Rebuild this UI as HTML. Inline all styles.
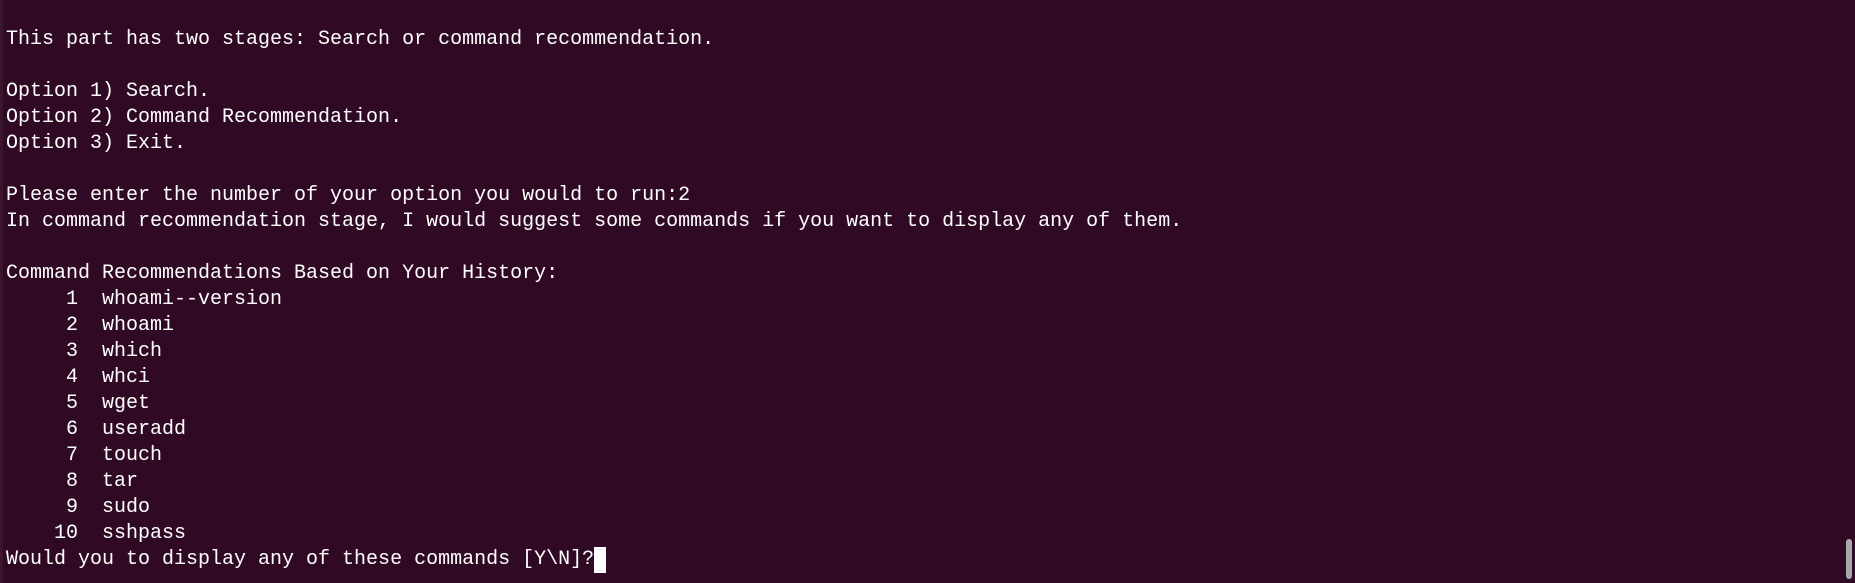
<!DOCTYPE html>
<html><head><meta charset="utf-8"><style>
html,body{margin:0;padding:0;background:#300a24;width:1855px;height:583px;overflow:hidden}
pre{margin:0;position:absolute;left:6px;top:27px;font-family:"Liberation Mono","DejaVu Sans Mono",monospace;font-size:20px;line-height:26px;color:#ffffff;letter-spacing:0}
.cur{display:inline-block;width:12px;height:26px;background:#fff;vertical-align:top}
.sb{position:absolute;left:1846px;top:539px;width:6px;height:40px;border-radius:3px;background:#a8a8a8}
.edge{position:absolute;left:0;top:0;width:3px;height:583px;background:#3a1530}
</style></head><body>
<div class="edge"></div>
<pre>This part has two stages: Search or command recommendation.

Option 1) Search.
Option 2) Command Recommendation.
Option 3) Exit.

Please enter the number of your option you would to run:2
In command recommendation stage, I would suggest some commands if you want to display any of them.

Command Recommendations Based on Your History:
     1  whoami--version
     2  whoami
     3  which
     4  whci
     5  wget
     6  useradd
     7  touch
     8  tar
     9  sudo
    10  sshpass
Would you to display any of these commands [Y\N]?<span class="cur"></span></pre>
<div class="sb"></div>
</body></html>
